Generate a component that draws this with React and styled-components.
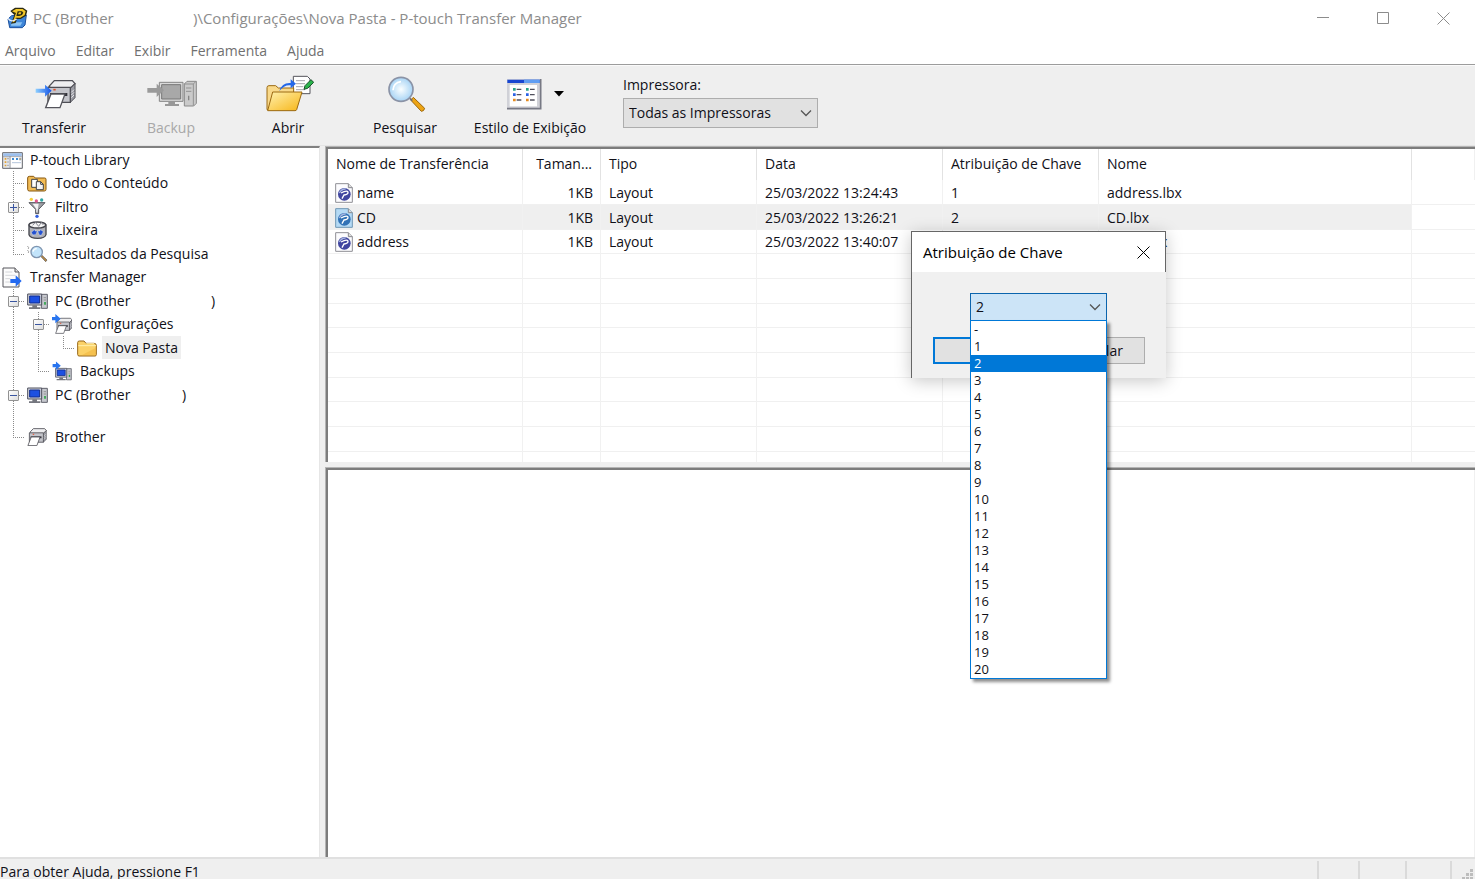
import React from "react";
import styled, { createGlobalStyle, css } from "styled-components";

const GlobalStyle = createGlobalStyle`
  * { box-sizing: border-box; }
  body {
    margin: 0;
    background: #fff;
    color: #101018;
    font-family: "Open Sans", "Noto Sans", sans-serif;
    font-size: 14px;
    line-height: 20px;
  }
  button, select { font: inherit; color: inherit; margin: 0; }
  button { padding: 0; border: 0; background: none; }
  ul { list-style: none; margin: 0; padding: 0; }
  svg { display: block; flex: none; }
`;

const Window = styled.div`
  display: flex;
  flex-direction: column;
  height: 100vh;
  overflow: hidden;
`;

const TitleBar = styled.header`
  display: flex;
  align-items: center;
  height: 36px;
  padding: 0 2px 0 7px;
  color: #8c8c8c;
  flex: none;
`;

const WindowTitle = styled.h1`
  display: flex;
  flex: 1;
  margin: 0 0 0 5px;
  font-size: 15px;
  font-weight: 400;
  white-space: pre;
`;

const TitleDevice = styled.span`
  width: 160px;
`;

const WindowButton = styled.button`
  display: grid;
  place-items: center;
  width: 60px;
  height: 36px;
`;

const MenuBar = styled.nav`
  display: flex;
  gap: 20px;
  height: 28px;
  padding: 2px 5px 0;
  color: #707070;
  flex: none;
`;

const Toolbar = styled.div`
  display: flex;
  height: 82px;
  padding-top: 1px;
  border-top: 1px solid #9c9c9c;
  border-bottom: 1px solid #e4e4e4;
  background: #efefef;
  box-shadow: inset 0 1px #fafafa;
  flex: none;
`;

const Tool = styled.button`
  display: flex;
  flex-direction: column;
  align-items: center;
  width: ${(p) => (p.$wide ? "124px" : "108px")};
  margin-right: ${(p) => (p.$wide ? "31px" : "9px")};
  padding-top: 6px;
  &:disabled { color: #a8a8a8; }
`;

const ToolArt = styled.span`
  display: flex;
  align-items: center;
  justify-content: center;
  gap: 12px;
  height: 44px;
  padding-left: ${(p) => (p.$menu ? "10px" : "3px")};
  margin-bottom: 2px;
`;

const PrinterField = styled.label`
  display: flex;
  flex-direction: column;
  gap: 3px;
  width: 195px;
  padding-top: 9px;
`;

const SelectBox = styled.span`
  display: grid;
  align-items: center;
  & > * { grid-area: 1 / 1; }
  & > svg { justify-self: end; margin-right: 6px; pointer-events: none; }
`;

const Select = styled.select`
  appearance: none;
  width: 100%;
  height: ${(p) => (p.$active ? "28px" : "30px")};
  padding: 0 24px 0 5px;
  border: 1px solid ${(p) => (p.$active ? "#0a64ad" : "#adadad")};
  border-radius: 0;
  background: ${(p) => (p.$active ? "#cce4f7" : "#e1e1e1")};
  outline: 0;
`;

const Workspace = styled.main`
  display: grid;
  grid-template-columns: 320px minmax(0, 1fr);
  column-gap: 5px;
  flex: 1;
  min-height: 0;
  background: #efefef;
`;

const TreePane = styled.aside`
  background: #fff;
  border-top: 2px solid #808080;
  border-right: 1px solid #e6e6e6;
  overflow: hidden;
`;

const TreeRow = styled.li`
  display: flex;
  height: 23px;
  line-height: 23px;
  white-space: pre;
  &:nth-child(even) { height: 24px; }
  &:nth-child(11) { height: 42px; }
`;

const dotsDown = "repeating-linear-gradient(to bottom, #8a8a8a 0 1px, transparent 1px 2px)";
const dotsAcross = "repeating-linear-gradient(to right, #8a8a8a 0 1px, transparent 1px 2px)";
const guideLines = {
  line: css`
    background: ${dotsDown} 13px 0 / 1px 100% no-repeat;
  `,
  tee: css`
    background: ${dotsDown} 13px 0 / 1px 100% no-repeat, ${dotsAcross} 13px 12px / 12px 1px no-repeat;
  `,
  elbow: css`
    background: ${dotsDown} 13px 0 / 1px 12px no-repeat, ${dotsAcross} 13px 12px / 12px 1px no-repeat;
  `,
};

const Guide = styled.span`
  width: 25px;
  flex: none;
  padding: 7px 0 0 8px;
  ${(p) => guideLines[p.$kind]}
`;

const Expander = styled.button`
  display: grid;
  place-items: center;
  width: 11px;
  height: 11px;
  border: 1px solid #929292;
  border-radius: 1px;
  background: linear-gradient(135deg, #fff, #dedede);
`;

const TreeIcon = styled.span`
  display: grid;
  place-items: center;
  width: 20px;
  height: 24px;
  margin: 0 5px 0 2px;
  flex: none;
`;

const TreeLabel = styled.span`
  display: flex;
  height: 23px;
  padding: 0 3px;
  background: ${(p) => (p.$selected ? "#efefef" : "none")};
`;

const TreeName = styled.span`
  width: ${(p) => p.$reserve || "auto"};
`;

const Content = styled.section`
  display: grid;
  grid-template-rows: 316px minmax(0, 1fr);
  row-gap: 5px;
  min-height: 0;
`;

const Pane = styled.div`
  overflow: hidden;
  padding: 2px 0 0 2px;
  background: #fff;
  border: solid #b4b4b4;
  border-width: 1px 0 0 1px;
  box-shadow: inset 2px 2px #7c7c7c, inset -1px 0 #f0f0f0;
`;

const FileTable = styled.table`
  width: 100%;
  table-layout: fixed;
  border-collapse: separate;
  border-spacing: 0;
  white-space: nowrap;
`;

const HeadCell = styled.th`
  height: 31px;
  padding: 0 8px 1px;
  font-weight: 400;
  text-align: ${(p) => (p.$right ? "right" : "left")};
  border-right: ${(p) => (p.$last ? "0" : "1px solid #e2e2e2")};
`;

const FileRow = styled.tr`
  background: ${(p) => (p.$selected ? "#efefef" : "none")};
  & > td { height: 25px; }
  &:nth-child(3n) > td { height: 24px; }
`;

const Cell = styled.td`
  padding: 1px 7px 0 8px;
  overflow: hidden;
  text-align: ${(p) => (p.$right ? "right" : "left")};
  border-right: ${(p) => (p.$last ? "0" : "1px solid #f1f1f1")};
  border-bottom: 1px solid #f0f0f0;
  background: ${(p) => (p.$last ? "#fff" : "none")};
  &:first-child { padding-left: 7px; }
`;

const FileName = styled.span`
  display: flex;
  align-items: center;
  gap: 4px;
`;

const StatusBar = styled.footer`
  display: flex;
  height: 22px;
  border-top: 2px solid #e0e0e0;
  background: #efefef;
  line-height: 26px;
  overflow: hidden;
  flex: none;
`;

const StatusText = styled.span`
  flex: 1;
`;

const StatusCell = styled.span`
  display: flex;
  justify-content: flex-end;
  width: ${(p) => p.$width};
  margin-top: 2px;
  border-left: 2px solid #dadada;
`;

const Dialog = styled.section`
  position: absolute;
  top: 231px;
  left: 911px;
  width: 255px;
  height: 147px;
  background: #f0f0f0;
  border: solid #666;
  border-width: 1px 0 0 1px;
  box-shadow: 0 3px 16px rgba(0, 0, 0, 0.22);
`;

const DialogHeader = styled.header`
  display: flex;
  align-items: center;
  justify-content: space-between;
  height: 40px;
  padding: 0 5px 0 11px;
  background: #fff;
  border-right: 1px solid #666;
  color: #000;
`;

const DialogTitle = styled.h2`
  margin: 0;
  font-size: 15px;
  font-weight: 400;
`;

const CloseButton = styled.button`
  display: grid;
  place-items: center;
  width: 34px;
  height: 34px;
`;

const DialogBody = styled.div`
  padding: 21px 21px 0;
`;

const KeyField = styled.div`
  position: relative;
  width: 137px;
  margin: 0 auto 16px 37px;
`;

const KeyOptions = styled.ul`
  position: absolute;
  z-index: 2;
  top: 27px;
  left: 0;
  width: 137px;
  background: #fff;
  border: 1px solid #0078d7;
  box-shadow: 3px 3px 3px rgba(0, 0, 0, 0.45);
`;

const KeyOption = styled.li`
  height: 17px;
  padding-left: 3px;
  font-size: 13px;
  line-height: 17px;
  color: ${(p) => (p.$selected ? "#fff" : "inherit")};
  background: ${(p) => (p.$selected ? "#0078d7" : "none")};
`;

const DialogActions = styled.div`
  display: flex;
  justify-content: space-between;
`;

const DialogButton = styled.button`
  width: 101px;
  height: 27px;
  background: #e1e1e1;
  border: ${(p) => (p.$primary ? "2px solid #0078d7" : "1px solid #adadad")};
`;

/* ---------- icons ---------- */

const AppIcon = () => (
  <svg width="21" height="22" viewBox="0 0 63 66">
    <path d="M3 36 14 26l44-2-4 30-8 8H8Z" fill="#3f86d8" stroke="#1b4f9c" strokeWidth="3" />
    <path d="M14 46h32l-6 10H12Z" fill="#8cc4f4" />
    <path d="M10 12 24 2h24l13 9-4 15-16 10H30l-4 12-14 2 10-26Z" fill="#2b2a12" />
    <path d="M15 13 27 6h20l9 7-3 11-13 8H27l-5 13-5 1 10-28Z" fill="#f3c828" />
    <path d="M32 13h13l4 4-4 7-8 3h-9Z" fill="#2b2a12" />
    <path d="M36 16h7l-2 6h-8Z" fill="#f3c828" />
    <path d="M3 34q10 14 26 2" fill="none" stroke="#e8eef8" strokeWidth="4" />
  </svg>
);

const MinimizeIcon = () => (
  <svg width="12" height="12" viewBox="0 0 12 12"><path d="M0 5.500h12" stroke="#8c8c8c" /></svg>
);
const MaximizeIcon = () => (
  <svg width="12" height="12" viewBox="0 0 12 12"><path d="M.5.5h11v11H.5Z" fill="none" stroke="#8c8c8c" /></svg>
);
const CloseIcon = ({ color = "#000" }) => (
  <svg width="13" height="13" viewBox="0 0 13 13"><path d="m.5.5 12 12m0-12-12 12" stroke={color} fill="none" /></svg>
);
const Chevron = () => (
  <svg width="12" height="8" viewBox="0 0 12 8"><path d="m1 1.500 5 5 5-5" fill="none" stroke="#555" strokeWidth="1.300" /></svg>
);

const PrinterShape = () => (
  <>
    <path d="M42 22 58 5h54l8 9-14 14H48Z" fill="#eeeef0" stroke="#4e4e55" strokeWidth="4" />
    <path d="m106 28 14-14v42l-14 14Z" fill="#9a9ba3" stroke="#4e4e55" strokeWidth="3" />
    <path d="M39 25h67v45H39Z" fill="#c3c4ca" stroke="#4e4e55" strokeWidth="4" />
    <path d="M45 42h52v9H45Z" fill="#303038" />
    <path d="M48 45h42L75 86H32Z" fill="#fff" stroke="#55555c" strokeWidth="4" />
    <path d="m109 40 8-8m-8 16 8-8m-8 16 8-8" stroke="#e4e4e8" strokeWidth="3" />
    <path d="M55 32h7" stroke="#e6502c" strokeWidth="5" />
  </>
);
const TransferIcon = () => (
  <svg width="42" height="34" viewBox="0 -6 126 102">
    <PrinterShape />
    <defs>
      <linearGradient id="arrowBlue"><stop stopColor="#8fd0ff" /><stop offset="1" stopColor="#1152e8" /></linearGradient>
    </defs>
    <path d="M2 29h28V17l20 18-20 18V41H2Z" fill="url(#arrowBlue)" />
  </svg>
);
const BackupIcon = () => (
  <svg width="52" height="32" viewBox="0 -6 156 96">
    <path d="m112 12 8-8h28v66l-8 8h-28Z" fill="#cacaca" stroke="#8a8a8a" strokeWidth="3" />
    <path d="M112 12h27v65m0-65 8-8M117 24h16m-16 10h16" fill="none" stroke="#929292" strokeWidth="3" />
    <path d="M125 47v14" stroke="#858585" strokeWidth="4" />
    <path d="M37 7h71v57H37Z" fill="#dadada" stroke="#858585" strokeWidth="3" />
    <path d="M44 14h57v43H44Z" fill="#a8a8a8" stroke="#777" strokeWidth="3" />
    <path d="M64 64h20v8h12v6H54v-6h10Z" fill="#989898" />
    <path d="M1 24h28V11l22 20-22 20V38H1Z" fill="#9a9a9a" />
  </svg>
);
const OpenIcon = () => (
  <svg width="48" height="38" viewBox="0 0 144 114">
    <defs>
      <linearGradient id="folderGold" x1="0" y1="0" x2="1" y2="1">
        <stop stopColor="#fff1b0" /><stop offset="1" stopColor="#f7b515" />
      </linearGradient>
    </defs>
    <path d="M82 4h42l8 8v44H82Z" fill="#fff" stroke="#55555c" strokeWidth="3" />
    <path d="M90 17h27m-27 9h27m-27 9h22m-22 9h27" stroke="#a6a6ae" strokeWidth="3" />
    <path d="M3 38q0-6 6-6h20l8 7h46v65H3Z" fill="#f9d98a" stroke="#9c6a12" strokeWidth="3" />
    <path d="M20 51h88L92 104q-1 3-5 3H5Z" fill="url(#folderGold)" stroke="#9c6a12" strokeWidth="3" />
    <path d="M40 48q8-26 34-24V13l16 13-16 14v-9Q56 28 40 48Z" fill="#2368ea" />
    <path d="m117 32 18-18 8 8-18 18-11 3Z" fill="#2bb34b" stroke="#174f28" strokeWidth="3" />
  </svg>
);
const SearchIcon = ({ width = 38, height = 37 }) => (
  <svg width={width} height={height} viewBox="0 0 114 111">
    <defs>
      <radialGradient id="lensBlue"><stop stopColor="#fafeff" /><stop offset="1" stopColor="#a8d4f5" /></radialGradient>
    </defs>
    <path d="m68 72 8-8 34 33q-2 9-10 9Z" fill="#eda414" stroke="#9d680c" strokeWidth="3" />
    <path d="m64 66 9 8" stroke="#6c6c76" strokeWidth="5" />
    <circle cx="39" cy="40" r="36" fill="url(#lensBlue)" stroke="#8b93a6" strokeWidth="5" />
    <path d="M15 43q1-23 24-26" fill="none" stroke="#fff" strokeWidth="5" />
  </svg>
);
const ViewStyleIcon = () => (
  <svg width="36" height="32" viewBox="0 0 108 96">
    <path d="M3 3h101v90H3Z" fill="#d0d1d7" />
    <path d="M104 3v89H3" fill="none" stroke="#777984" strokeWidth="5" />
    <path d="M4 5h97v10H4Z" fill="#1846d0" />
    <path d="M54 5h47v10H54Z" fill="#5f9df2" />
    <path d="M11 21h82v64H11Z" fill="#fff" />
    <g strokeWidth="4">
      <path d="M32 34h14m26 0h14M32 50h14m26 0h14M32 66h14m26 0h14" stroke="#50505c" />
    </g>
    <path d="M21 30h8v8h-8Zm39 0h8v8h-8Z" fill="#2aa486" />
    <path d="M21 46h8v8h-8Zm39 0h8v8h-8Z" fill="#2a62e6" />
    <path d="M21 62h8v8h-8Zm39 0h8v8h-8Z" fill="#e58c22" />
  </svg>
);
const DropArrow = () => (
  <svg width="10" height="6" viewBox="0 0 10 6"><path d="M0 0h10L5 5.500Z" fill="#000" /></svg>
);

const LibraryIcon = () => (
  <svg width="21" height="17" viewBox="0 0 63 51">
    <path d="M2 2h59v47H2Z" fill="#e4e6ea" stroke="#66686e" strokeWidth="3" />
    <path d="M4 4h55v8H4Z" fill="#9dc0ee" />
    <path d="M24 12v36M3 14h56" stroke="#8a8c92" strokeWidth="2" />
    <path d="M27 16h31v30H27Z" fill="#fff" />
    <path d="M30 18h6v6h-6Zm12 0h6v6h-6Z" fill="#3f8ad0" />
    <path d="M52 18h5v6h-5ZM30 32h27" fill="#e7a52d" stroke="#8fa9cb" strokeWidth="2" />
    <path d="M8 18h5v5H8Zm0 10h5v5H8Zm0 10h5v5H8Z" fill="#e3a233" />
    <path d="M15 20h6m-6 10h6m-6 10h6" stroke="#8d8f95" strokeWidth="2" />
  </svg>
);
const AllContentIcon = () => (
  <svg width="20" height="17" viewBox="0 0 60 51">
    <path d="M2 9q0-5 5-5h13l5 5h28q4 0 4 4v30q0 5-5 5H7q-5 0-5-5Z" fill="#f2bc55" stroke="#86560f" strokeWidth="3" />
    <path d="M14 13h17v24H14Z" fill="#fff" stroke="#444" strokeWidth="3" />
    <path d="M28 20h13l8 8v16H28Z" fill="#f4f4f4" stroke="#444" strokeWidth="3" />
    <path d="M41 20v8h8" fill="none" stroke="#444" strokeWidth="3" />
  </svg>
);
const FilterIcon = () => (
  <svg width="18" height="21" viewBox="0 0 54 63">
    <path d="M3 17h48L32 37v13l-9 0V37Z" fill="#9fa1a6" stroke="#53555c" strokeWidth="3" />
    <path d="M14 20h18L28 46h-3V36Z" fill="#f4f4f5" />
    <circle cx="10" cy="7" r="5" fill="#f5cf3e" /><circle cx="25" cy="12" r="5" fill="#e0588d" />
    <circle cx="41" cy="9" r="5" fill="#31a7a4" /><circle cx="27" cy="58" r="5" fill="#315fe0" />
  </svg>
);
const TrashIcon = () => (
  <svg width="19" height="18" viewBox="0 0 57 54">
    <path d="M3 12v29q4 11 26 11t25-11V12Z" fill="#b0b1b8" stroke="#44454c" strokeWidth="4" />
    <ellipse cx="28" cy="12" rx="25" ry="9" fill="#f5f5f5" stroke="#44454c" strokeWidth="4" />
    <path d="m14 13 8-9 10 12 8-12 6 8" fill="none" stroke="#888992" strokeWidth="3" />
    <path d="m10 34 11-9v5h7l-5 11h-7v4Zm36-2-10-7v5h-7l5 12h4v4Z" fill="#2451cf" stroke="#fff" strokeWidth="1" />
  </svg>
);
const ResultsIcon = () => (
  <svg width="21" height="18" viewBox="0 0 63 54">
    <path d="m41 34 4-3 15 14-4 5Z" fill="#b98a45" stroke="#555" strokeWidth="2" />
    <circle cx="29" cy="21" r="17" fill="#c2e4fb" stroke="#7f95b0" strokeWidth="4" />
    <path d="M18 20q2-9 11-9" stroke="#fff" fill="none" strokeWidth="4" />
    <path d="M1 3q6 4 3 9m-3 3q6 4 3 9" fill="none" stroke="#777" strokeWidth="2" />
  </svg>
);
const ManagerIcon = () => (
  <svg width="20" height="21" viewBox="0 0 60 63">
    <path d="M3 3h36l12 12v45H3Z" fill="#fcfcfc" stroke="#56575d" strokeWidth="3" />
    <path d="M39 3v12h12" fill="#ddd" stroke="#56575d" strokeWidth="3" />
    <path d="M10 15h21M10 25h29M10 35h15M10 45h15" stroke="#c0c1c7" strokeWidth="2" />
    <path d="M25 36h16V25l18 17-18 17V48H25Z" fill="#246af0" />
  </svg>
);
const PcShape = () => (
  <>
    <path d="M43 4h18v42H43Z" fill="#c6c8ce" stroke="#5f616a" strokeWidth="3" />
    <path d="M50 14h7m-7 7h7" stroke="#777" strokeWidth="2" />
    <path d="M54 27v8" stroke="#2ca346" strokeWidth="5" />
    <path d="M2 3h42v33H2Z" fill="#d2d4dc" stroke="#4f515e" strokeWidth="3" />
    <path d="M8 9h30v21H8Z" fill="#1c50e2" stroke="#102d8e" strokeWidth="3" />
    <path d="M16 37h14v6h10v5H6v-5h10Z" fill="#74767e" />
  </>
);
const PcIcon = () => (
  <svg width="21" height="17" viewBox="0 0 63 51"><PcShape /></svg>
);
const BackupsIcon = () => (
  <svg width="20" height="21" viewBox="0 0 66 66">
    <g transform="translate(10 20) scale(.88)"><PcShape /></g>
    <path d="M2 8h11V0l16 14-16 14v-9H2Z" fill="#2875ef" />
  </svg>
);
const SmallPrinterIcon = () => (
  <svg width="20" height="18" viewBox="29 2 93 86"><PrinterShape /></svg>
);
const SettingsIcon = () => (
  <svg width="20" height="20" viewBox="0 0 60 60">
    <g transform="translate(-7 10) scale(.56)"><PrinterShape /></g>
    <path d="M0 9h10V0l16 14-16 14v-9H0Z" fill="#2875ef" />
  </svg>
);
const FolderIcon = () => (
  <svg width="20" height="17" viewBox="0 0 60 51">
    <path d="M2 43V8q0-5 5-5h14l6 7h24q7 0 7 6v28q0 4-4 4H6q-4 0-4-5Z" fill="#fbd167" stroke="#986718" strokeWidth="3" />
    <path d="M4 17h53M28 11h24" stroke="#fff0ac" strokeWidth="3" />
    <path d="M57 23v23H14Z" fill="#f0b138" opacity=".5" />
  </svg>
);
const LayoutFileIcon = ({ selected }) => (
  <svg width="18" height="20" viewBox="0 0 54 60">
    <path d="M2 2h38l12 12v44H2Z" fill={selected ? "#b5daf5" : "#fcfcfe"} stroke={selected ? "#6f97b5" : "#909096"} strokeWidth="3" />
    <path d="M40 2v12h12" fill="#ddd" stroke="#88888e" strokeWidth="3" />
    <circle cx="28" cy="34" r="19" fill={selected ? "#3272b6" : "#4146a0"} />
    <path d="M13 30q7-13 19-12" fill="none" stroke="#a7b6e0" strokeWidth="4" />
    <path d="M18 30q17-9 21-3 1 8-12 9l-6 11" fill="none" stroke="#fff" strokeWidth="4" />
  </svg>
);

/* ---------- data ---------- */

const menus = ["Arquivo", "Editar", "Exibir", "Ferramenta", "Ajuda"];

const treeRows = [
  { name: "P-touch Library", icon: LibraryIcon, guides: [] },
  { name: "Todo o Conteúdo", icon: AllContentIcon, guides: ["tee"] },
  { name: "Filtro", icon: FilterIcon, guides: ["tee"], toggle: "closed" },
  { name: "Lixeira", icon: TrashIcon, guides: ["tee"] },
  { name: "Resultados da Pesquisa", icon: ResultsIcon, guides: ["elbow"] },
  { name: "Transfer Manager", icon: ManagerIcon, guides: [] },
  { name: "PC (Brother", end: ")", reserve: "156px", icon: PcIcon, guides: ["tee"], toggle: "open" },
  { name: "Configurações", icon: SettingsIcon, guides: ["line", "tee"], toggle: "open" },
  { name: "Nova Pasta", icon: FolderIcon, guides: ["line", "line", "elbow"], selected: true },
  { name: "Backups", icon: BackupsIcon, guides: ["line", "elbow"] },
  { name: "PC (Brother", end: ")", reserve: "127px", icon: PcIcon, guides: ["tee"], toggle: "open" },
  { name: "Brother", icon: SmallPrinterIcon, guides: ["elbow"] },
];

const columns = [
  { label: "Nome de Transferência", width: 195 },
  { label: "Taman...", width: 78, right: true },
  { label: "Tipo", width: 156 },
  { label: "Data", width: 186 },
  { label: "Atribuição de Chave", width: 156 },
  { label: "Nome", width: 313 },
  { label: "" },
];

const files = [
  ["name", "1KB", "Layout", "25/03/2022 13:24:43", "1", "address.lbx"],
  ["CD", "1KB", "Layout", "25/03/2022 13:26:21", "2", "CD.lbx"],
  ["address", "1KB", "Layout", "25/03/2022 13:40:07", "", "name.lbx"],
];
const selectedFile = 1;
const blankRows = 9;

const keys = ["-", ...Array.from({ length: 20 }, (_, i) => String(i + 1))];

/* ---------- sections ---------- */

function TreeItem({ row }) {
  const Icon = row.icon;
  const last = row.guides.length - 1;
  return (
    <TreeRow role="treeitem" aria-level={row.guides.length + 1} aria-selected={!!row.selected}>
      {row.guides.map((kind, i) => (
        <Guide key={i} $kind={kind}>
          {row.toggle && i === last && (
            <Expander aria-label={row.toggle === "open" ? "Recolher" : "Expandir"}>
              <svg width="7" height="7" viewBox="0 0 7 7">
                <path d={row.toggle === "open" ? "M0 3.500h7" : "M0 3.500h7M3.500 0v7"} stroke="#3a56a0" />
              </svg>
            </Expander>
          )}
        </Guide>
      ))}
      <TreeIcon><Icon /></TreeIcon>
      <TreeLabel $selected={row.selected}>
        <TreeName $reserve={row.reserve}>{row.name}</TreeName>
        {row.end}
      </TreeLabel>
    </TreeRow>
  );
}

function FileList() {
  return (
    <FileTable>
      <colgroup>
        {columns.map((c, i) => <col key={i} width={c.width} />)}
      </colgroup>
      <thead>
        <tr>
          {columns.map((c, i) => (
            <HeadCell key={i} $right={c.right} $last={i === columns.length - 1}>{c.label}</HeadCell>
          ))}
        </tr>
      </thead>
      <tbody>
        {files.map((file, r) => (
          <FileRow key={r} $selected={r === selectedFile}>
            {file.map((value, i) => (
              <Cell key={i} $right={columns[i].right}>
                {i === 0 ? (
                  <FileName><LayoutFileIcon selected={r === selectedFile} />{value}</FileName>
                ) : value}
              </Cell>
            ))}
            <Cell $last />
          </FileRow>
        ))}
        {Array.from({ length: blankRows }, (_, r) => (
          <FileRow key={r}>
            {columns.map((c, i) => <Cell key={i} $last={i === columns.length - 1} />)}
          </FileRow>
        ))}
      </tbody>
    </FileTable>
  );
}

function KeyDialog() {
  return (
    <Dialog role="dialog" aria-labelledby="key-dialog-title">
      <DialogHeader>
        <DialogTitle id="key-dialog-title">Atribuição de Chave</DialogTitle>
        <CloseButton aria-label="Fechar"><CloseIcon /></CloseButton>
      </DialogHeader>
      <DialogBody>
        <KeyField>
          <SelectBox>
            <Select $active aria-label="Atribuição de Chave" defaultValue="2">
              {keys.map((k) => <option key={k}>{k}</option>)}
            </Select>
            <Chevron />
          </SelectBox>
          <KeyOptions role="listbox" aria-label="Teclas">
            {keys.map((k) => (
              <KeyOption key={k} role="option" aria-selected={k === "2"} $selected={k === "2"}>{k}</KeyOption>
            ))}
          </KeyOptions>
        </KeyField>
        <DialogActions>
          <DialogButton $primary>OK</DialogButton>
          <DialogButton>Cancelar</DialogButton>
        </DialogActions>
      </DialogBody>
    </Dialog>
  );
}

export default function App() {
  return (
    <Window>
      <GlobalStyle />
      <TitleBar>
        <AppIcon />
        <WindowTitle>
          <TitleDevice>PC (Brother</TitleDevice>
          <span>{")\\Configurações\\Nova Pasta - P-touch Transfer Manager"}</span>
        </WindowTitle>
        <WindowButton aria-label="Minimizar"><MinimizeIcon /></WindowButton>
        <WindowButton aria-label="Maximizar"><MaximizeIcon /></WindowButton>
        <WindowButton aria-label="Fechar"><CloseIcon color="#8c8c8c" /></WindowButton>
      </TitleBar>
      <MenuBar>
        {menus.map((m) => <button key={m}>{m}</button>)}
      </MenuBar>
      <Toolbar>
        <Tool><ToolArt><TransferIcon /></ToolArt>Transferir</Tool>
        <Tool disabled><ToolArt><BackupIcon /></ToolArt>Backup</Tool>
        <Tool><ToolArt><OpenIcon /></ToolArt>Abrir</Tool>
        <Tool><ToolArt><SearchIcon /></ToolArt>Pesquisar</Tool>
        <Tool $wide><ToolArt $menu><ViewStyleIcon /><DropArrow /></ToolArt>Estilo de Exibição</Tool>
        <PrinterField>
          Impressora:
          <SelectBox>
            <Select defaultValue="Todas as Impressoras"><option>Todas as Impressoras</option></Select>
            <Chevron />
          </SelectBox>
        </PrinterField>
      </Toolbar>
      <Workspace>
        <TreePane>
          <ul role="tree">
            {treeRows.map((row, i) => <TreeItem key={i} row={row} />)}
          </ul>
        </TreePane>
        <Content>
          <Pane><FileList /></Pane>
          <Pane />
        </Content>
      </Workspace>
      <StatusBar>
        <StatusText>Para obter Ajuda, pressione F1</StatusText>
        <StatusCell $width="41px" />
        <StatusCell $width="47px" />
        <StatusCell $width="45px" />
        <StatusCell $width="25px">
          <svg width="14" height="20" viewBox="0 0 14 20">
            <path d="M9 8h3v3H9ZM5 12h3v3H5Zm4 0h3v3H9ZM1 16h3v3H1Zm4 0h3v3H5Zm4 0h3v3H9Z" fill="#bdbdbd" />
          </svg>
        </StatusCell>
      </StatusBar>
      <KeyDialog />
    </Window>
  );
}
